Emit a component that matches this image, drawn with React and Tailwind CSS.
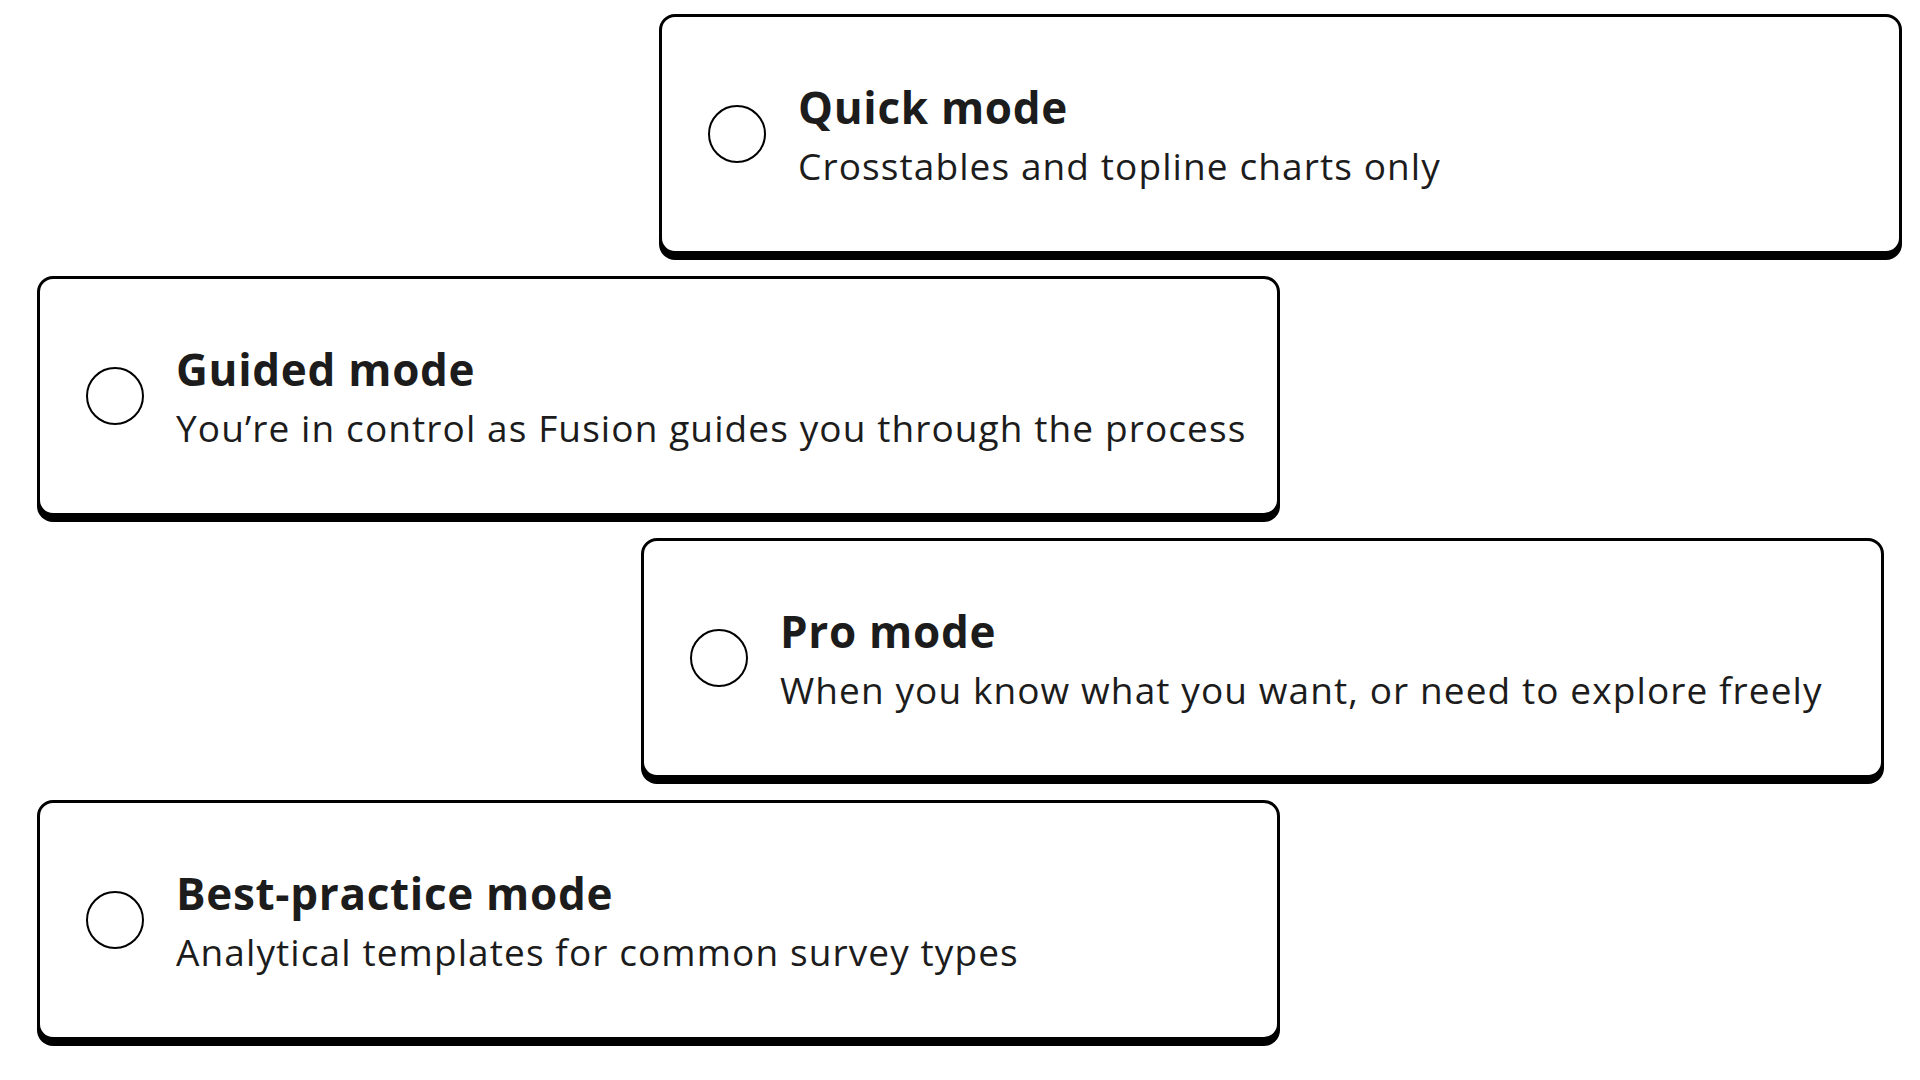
import React from "react";

const modes = [
  { title: "Quick mode", desc: "Crosstables and topline charts only", offset: "ml-[659px]" },
  { title: "Guided mode", desc: "You’re in control as Fusion guides you through the process", offset: "ml-[37px]" },
  { title: "Pro mode", desc: "When you know what you want, or need to explore freely", offset: "ml-[641px]" },
  { title: "Best-practice mode", desc: "Analytical templates for common survey types", offset: "ml-[37px]" },
];

export default function App() {
  return (
    <div className="min-h-screen bg-white pt-[14px] font-['Open_Sans','Noto_Sans',sans-serif] text-[#1c1c1c]">
      <div className="flex flex-col gap-[22px]">
        {modes.map((mode) => (
          <label
            key={mode.title}
            className={`${mode.offset} flex h-[240px] w-[1243px] cursor-pointer items-center rounded-2xl border-[3px] border-black bg-white pl-[46px] shadow-[0_6px_0_#000]`}
          >
            {/* Radio */}
            <span className="h-[58px] w-[58px] shrink-0 rounded-full border-2 border-black" />

            {/* Text */}
            <div className="ml-[32px] flex flex-col">
              <span className="text-[44px] font-bold leading-[56px] tracking-[0.7px]">{mode.title}</span>
              <span className="mt-[7px] text-[37px] leading-[48px] tracking-[1.1px]">{mode.desc}</span>
            </div>
          </label>
        ))}
      </div>
    </div>
  );
}
